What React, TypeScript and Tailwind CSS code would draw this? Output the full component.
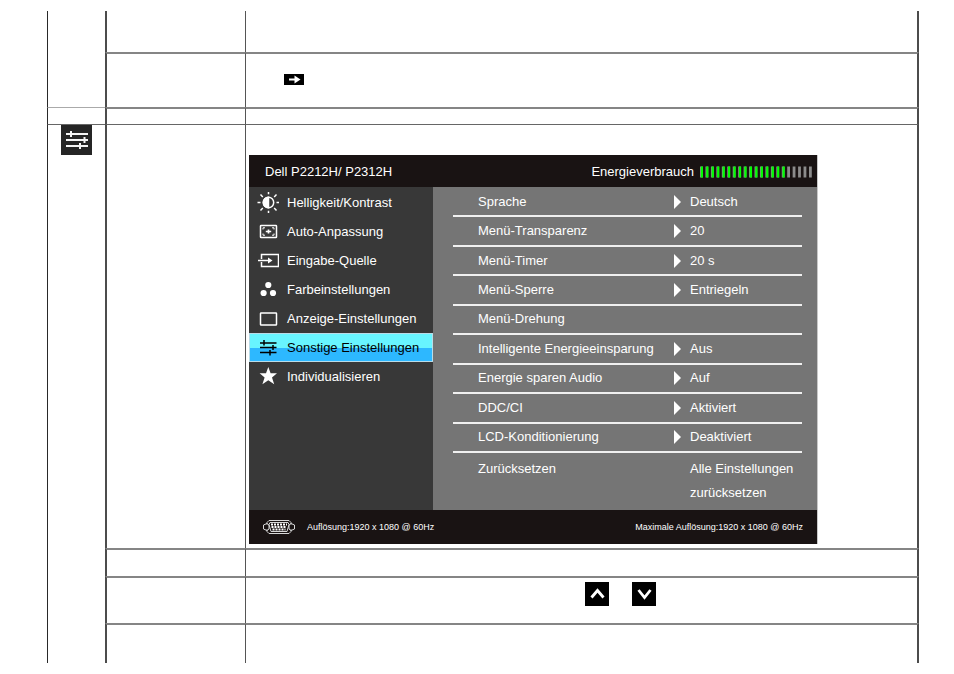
import type { ReactNode } from "react";

const Icon = ({ children }: { children: ReactNode }) => (
  <svg className="h-[22px] w-[22px] shrink-0" viewBox="0 0 22 22" fill="none" stroke="currentColor" strokeWidth="1.5" aria-hidden="true">
    {children}
  </svg>
);

const BrightnessIcon = () => (
  <Icon>
    <circle cx="11.500" cy="10.500" r="5.200" />
    <path d="M11.500 5.300a5.200 5.200 0 0 0 0 10.400z" fill="currentColor" />
    <path d="M11.500 0v2.200M11.500 18.800V21M0.500 10.500h3M19.500 10.500h3M3.500 2.500l2.300 2.400M17.200 16.100l2.300 2.400M3.500 18.500l2.300-2.400M17.200 4.900l2.300-2.400" />
  </Icon>
);

const AutoAdjustIcon = () => (
  <Icon>
    <rect x="3.500" y="4.500" width="16" height="12" rx="0.600" />
    <path d="M6 8.500V6.800h2M17 8.500V6.800h-2M6 12.500v1.700h2M17 12.500v1.700h-2" strokeWidth="1" />
    <path d="M8.800 10.500h5.400M11.500 8.500v4" strokeWidth="1.700" />
  </Icon>
);

const InputIcon = () => (
  <Icon>
    <path d="M4.500 9V4.500h17v12h-17V12" />
    <path d="M1 10.500h12" />
    <path d="m11 7.500 4.500 3-4.500 3z" fill="currentColor" stroke="none" />
  </Icon>
);

const ColorIcon = () => (
  <Icon>
    <g fill="currentColor" stroke="none">
      <circle cx="11.300" cy="6" r="3.100" />
      <circle cx="6.600" cy="14" r="3.100" />
      <circle cx="16" cy="14" r="3.100" />
    </g>
  </Icon>
);

const DisplayIcon = () => (
  <Icon>
    <rect x="3.500" y="5" width="16" height="12" rx="0.600" />
  </Icon>
);

const OtherIcon = () => (
  <Icon>
    <path d="M3 6h16.500M3 10.500h16.500M3 15.500h16.500" />
    <path d="M7 3v5.500M16 8v5M13 13v5.500" />
  </Icon>
);

const StarIcon = () => (
  <Icon>
    <path d="m11.300 1 2.300 6.300h6.400l-5 4.100 2.200 6.800-5.900-4-5.900 4 2.200-6.800-5-4.100H9z" fill="currentColor" stroke="none" />
  </Icon>
);

const VgaIcon = () => (
  <svg className="h-4 w-[34px]" viewBox="0 0 34 16" fill="none" stroke="#d8d8d8" strokeWidth="1" aria-hidden="true">
    <path d="M7 1.500h20l2 2M5 3.500l2-2M5 12.500l2 2h20l2-2M5 3.500v2M29 3.500v2M5 10.500v2M29 10.500v2" />
    <path d="M8 3.500h18l1 2-2 7H9l-2-7z" />
    <path d="M5 4.500 1.500 6v4L5 11.500 7 10V6zM29 4.500 32.500 6v4L29 11.500 27 10V6z" />
    <path d="M9 5.500h16M9.500 8h15M10.500 10.500h13" strokeWidth="2" strokeDasharray="2 1" stroke="#ffffff" />
  </svg>
);

const menu = [
  { label: "Helligkeit/Kontrast", icon: <BrightnessIcon /> },
  { label: "Auto-Anpassung", icon: <AutoAdjustIcon /> },
  { label: "Eingabe-Quelle", icon: <InputIcon /> },
  { label: "Farbeinstellungen", icon: <ColorIcon /> },
  { label: "Anzeige-Einstellungen", icon: <DisplayIcon /> },
  { label: "Sonstige Einstellungen", icon: <OtherIcon />, active: true },
  { label: "Individualisieren", icon: <StarIcon /> },
];

const settings = [
  { label: "Sprache", value: "Deutsch" },
  { label: "Menü-Transparenz", value: "20" },
  { label: "Menü-Timer", value: "20 s" },
  { label: "Menü-Sperre", value: "Entriegeln" },
  { label: "Menü-Drehung", value: "" },
  { label: "Intelligente Energieeinsparung", value: "Aus" },
  { label: "Energie sparen Audio", value: "Auf" },
  { label: "DDC/CI", value: "Aktiviert" },
  { label: "LCD-Konditionierung", value: "Deaktiviert" },
];

const EnergyMeter = () => (
  <svg className="h-3 w-28" viewBox="0 0 112 12" role="img" aria-label="Energieverbrauch">
    {Array.from({ length: 21 }, (_, i) => (
      <g key={i}>
        <rect x={i * 5.45} y="0.5" width="2.8" height="11" fill="#8c8c8c" />
        {i < 16 && <rect x={i * 5.45 + 0.8} y="0.5" width="2.2" height="11" fill="#00ff00" />}
      </g>
    ))}
  </svg>
);

const Osd = () => (
  <section className="flex w-[569px] max-w-full flex-col border-r border-[#c8c8c8] text-[13px] leading-4 text-white">
    <header className="flex h-8 items-center justify-between bg-[#191313] pt-0.5 pr-[5px] pl-4">
      <h1>Dell P2212H/ P2312H</h1>
      <div className="flex items-center gap-1.5">
        <span>Energieverbrauch</span>
        <EnergyMeter />
      </div>
    </header>
    <div className="flex bg-[#757575]">
      <nav className="w-[184px] shrink-0 bg-[#383838] pt-px">
        {menu.map((m) => (
          <button
            key={m.label}
            type="button"
            className={
              m.active
                ? "flex h-[29px] w-full items-center gap-2 border border-[#b9dce8] bg-linear-to-b from-[#68f5ff] from-50% to-[#2db8ff] to-50% pl-[7px] text-black"
                : "flex h-[29px] w-full items-center gap-2 pl-2"
            }
          >
            {m.icon}
            <span className="whitespace-nowrap">{m.label}</span>
          </button>
        ))}
      </nav>
      <div className="flex h-[323px] min-w-0 flex-1 flex-col pt-px pr-[15px] pl-5">
        <ul className="flex h-[265px] flex-col">
          {settings.map((s) => (
            <li key={s.label} className="flex flex-1 items-center border-b-2 border-[#f0f0f0] pl-[25px]">
              <span className="w-[196px] whitespace-nowrap">{s.label}</span>
              {s.value && (
                <button type="button" className="flex items-center gap-[9px]">
                  <svg className="h-[14px] w-[7px]" viewBox="0 0 7 14" fill="#fff" aria-hidden="true">
                    <path d="M0 0l7 7-7 7z" />
                  </svg>
                  {s.value}
                </button>
              )}
            </li>
          ))}
        </ul>
        <div className="flex pt-1 pl-[25px] leading-6">
          <span className="w-[212px]">Zurücksetzen</span>
          <button type="button" className="text-left">
            Alle Einstellungen
            <br />
            zurücksetzen
          </button>
        </div>
      </div>
    </div>
    <footer className="flex h-[34px] items-center justify-between bg-[#191313] pr-[14px] pl-[13px] text-[9px]">
      <div className="flex items-center gap-[11px]">
        <VgaIcon />
        <span>Auflösung:1920 x 1080 @ 60Hz</span>
      </div>
      <span>Maximale Auflösung:1920 x 1080 @ 60Hz</span>
    </footer>
  </section>
);

const side = "border-l border-l-[#292929] p-0 align-top";
const name = "border-l-2 border-l-[#4c4c4c] p-0";
const body = "border-l border-l-[#555555] border-r-2 border-r-[#4c4c4c] p-0 align-top";
const rule = "border-t-2 border-t-[#858585]";
const thin = "border-t border-t-[#666666]";

export default function App() {
  return (
    <main className="bg-white pt-[11px] pr-[35px] pl-[47px] font-['Liberation_Sans',Arial,sans-serif]">
      <table className="w-full table-fixed border-separate border-spacing-0">
        <colgroup>
          <col className="w-[58px]" />
          <col className="w-[140px]" />
          <col />
        </colgroup>
        <tbody>
          <tr className="h-[41px]">
            <td rowSpan={2} className={side} />
            <td className={name} />
            <td className={body} />
          </tr>
          <tr className="h-[55px]">
            <td className={`${name} ${rule}`} />
            <td className={`${body} ${rule}`}>
              <svg className="mt-5 ml-[38px] block h-[11px] w-5" viewBox="0 0 20 11" aria-label="Weiter" role="img">
                <rect width="20" height="11" />
                <path d="M5 4.500h5.500V1.500L16.500 5.500l-6 4V6.500H5z" fill="#fff" />
              </svg>
            </td>
          </tr>
          <tr className="h-[17px]">
            <td className={`${side} border-t border-t-[#aaaaaa]`} />
            <td className={`${name} ${rule}`} />
            <td className={`${body} ${rule}`} />
          </tr>
          <tr className="h-[424px]">
            <td rowSpan={4} className={`${side} ${thin}`}>
              <svg className="ml-[13px] block h-[30px] w-[31px]" viewBox="0 0 31 30" role="img" aria-label="Sonstige Einstellungen">
                <rect width="31" height="30" fill="#252525" />
                <g transform="translate(5 6)" fill="none" stroke="#f5f5f5" strokeWidth="2">
                  <path d="M0 3h22M0 9h22M0 15h22" />
                  <path d="M5 0v6M18.500 6v6M14 12v6" />
                </g>
              </svg>
            </td>
            <td className={`${name} ${thin}`} />
            <td className={`${body} ${thin}`}>
              <div className="pt-[30px] pl-[3px]">
                <Osd />
              </div>
            </td>
          </tr>
          <tr className="h-7">
            <td className={`${name} ${rule}`} />
            <td className={`${body} ${rule}`} />
          </tr>
          <tr className="h-[47px]">
            <td className={`${name} ${rule}`} />
            <td className={`${body} ${rule}`}>
              <div className="flex gap-[23px] pt-1 pl-[339px]">
                <button type="button" aria-label="Nach oben" className="h-6 w-6 bg-black">
                  <svg viewBox="0 0 24 24" fill="none" stroke="#fff" strokeWidth="2.800" aria-hidden="true">
                    <path d="m6.500 15.500 6-7 6 7" />
                  </svg>
                </button>
                <button type="button" aria-label="Nach unten" className="h-6 w-6 bg-black">
                  <svg viewBox="0 0 24 24" fill="none" stroke="#fff" strokeWidth="2.800" aria-hidden="true">
                    <path d="m6.500 8 6 7.500 6-7.500" />
                  </svg>
                </button>
              </div>
            </td>
          </tr>
          <tr className="h-10">
            <td className={`${name} ${rule}`} />
            <td className={`${body} ${rule}`} />
          </tr>
        </tbody>
      </table>
    </main>
  );
}
